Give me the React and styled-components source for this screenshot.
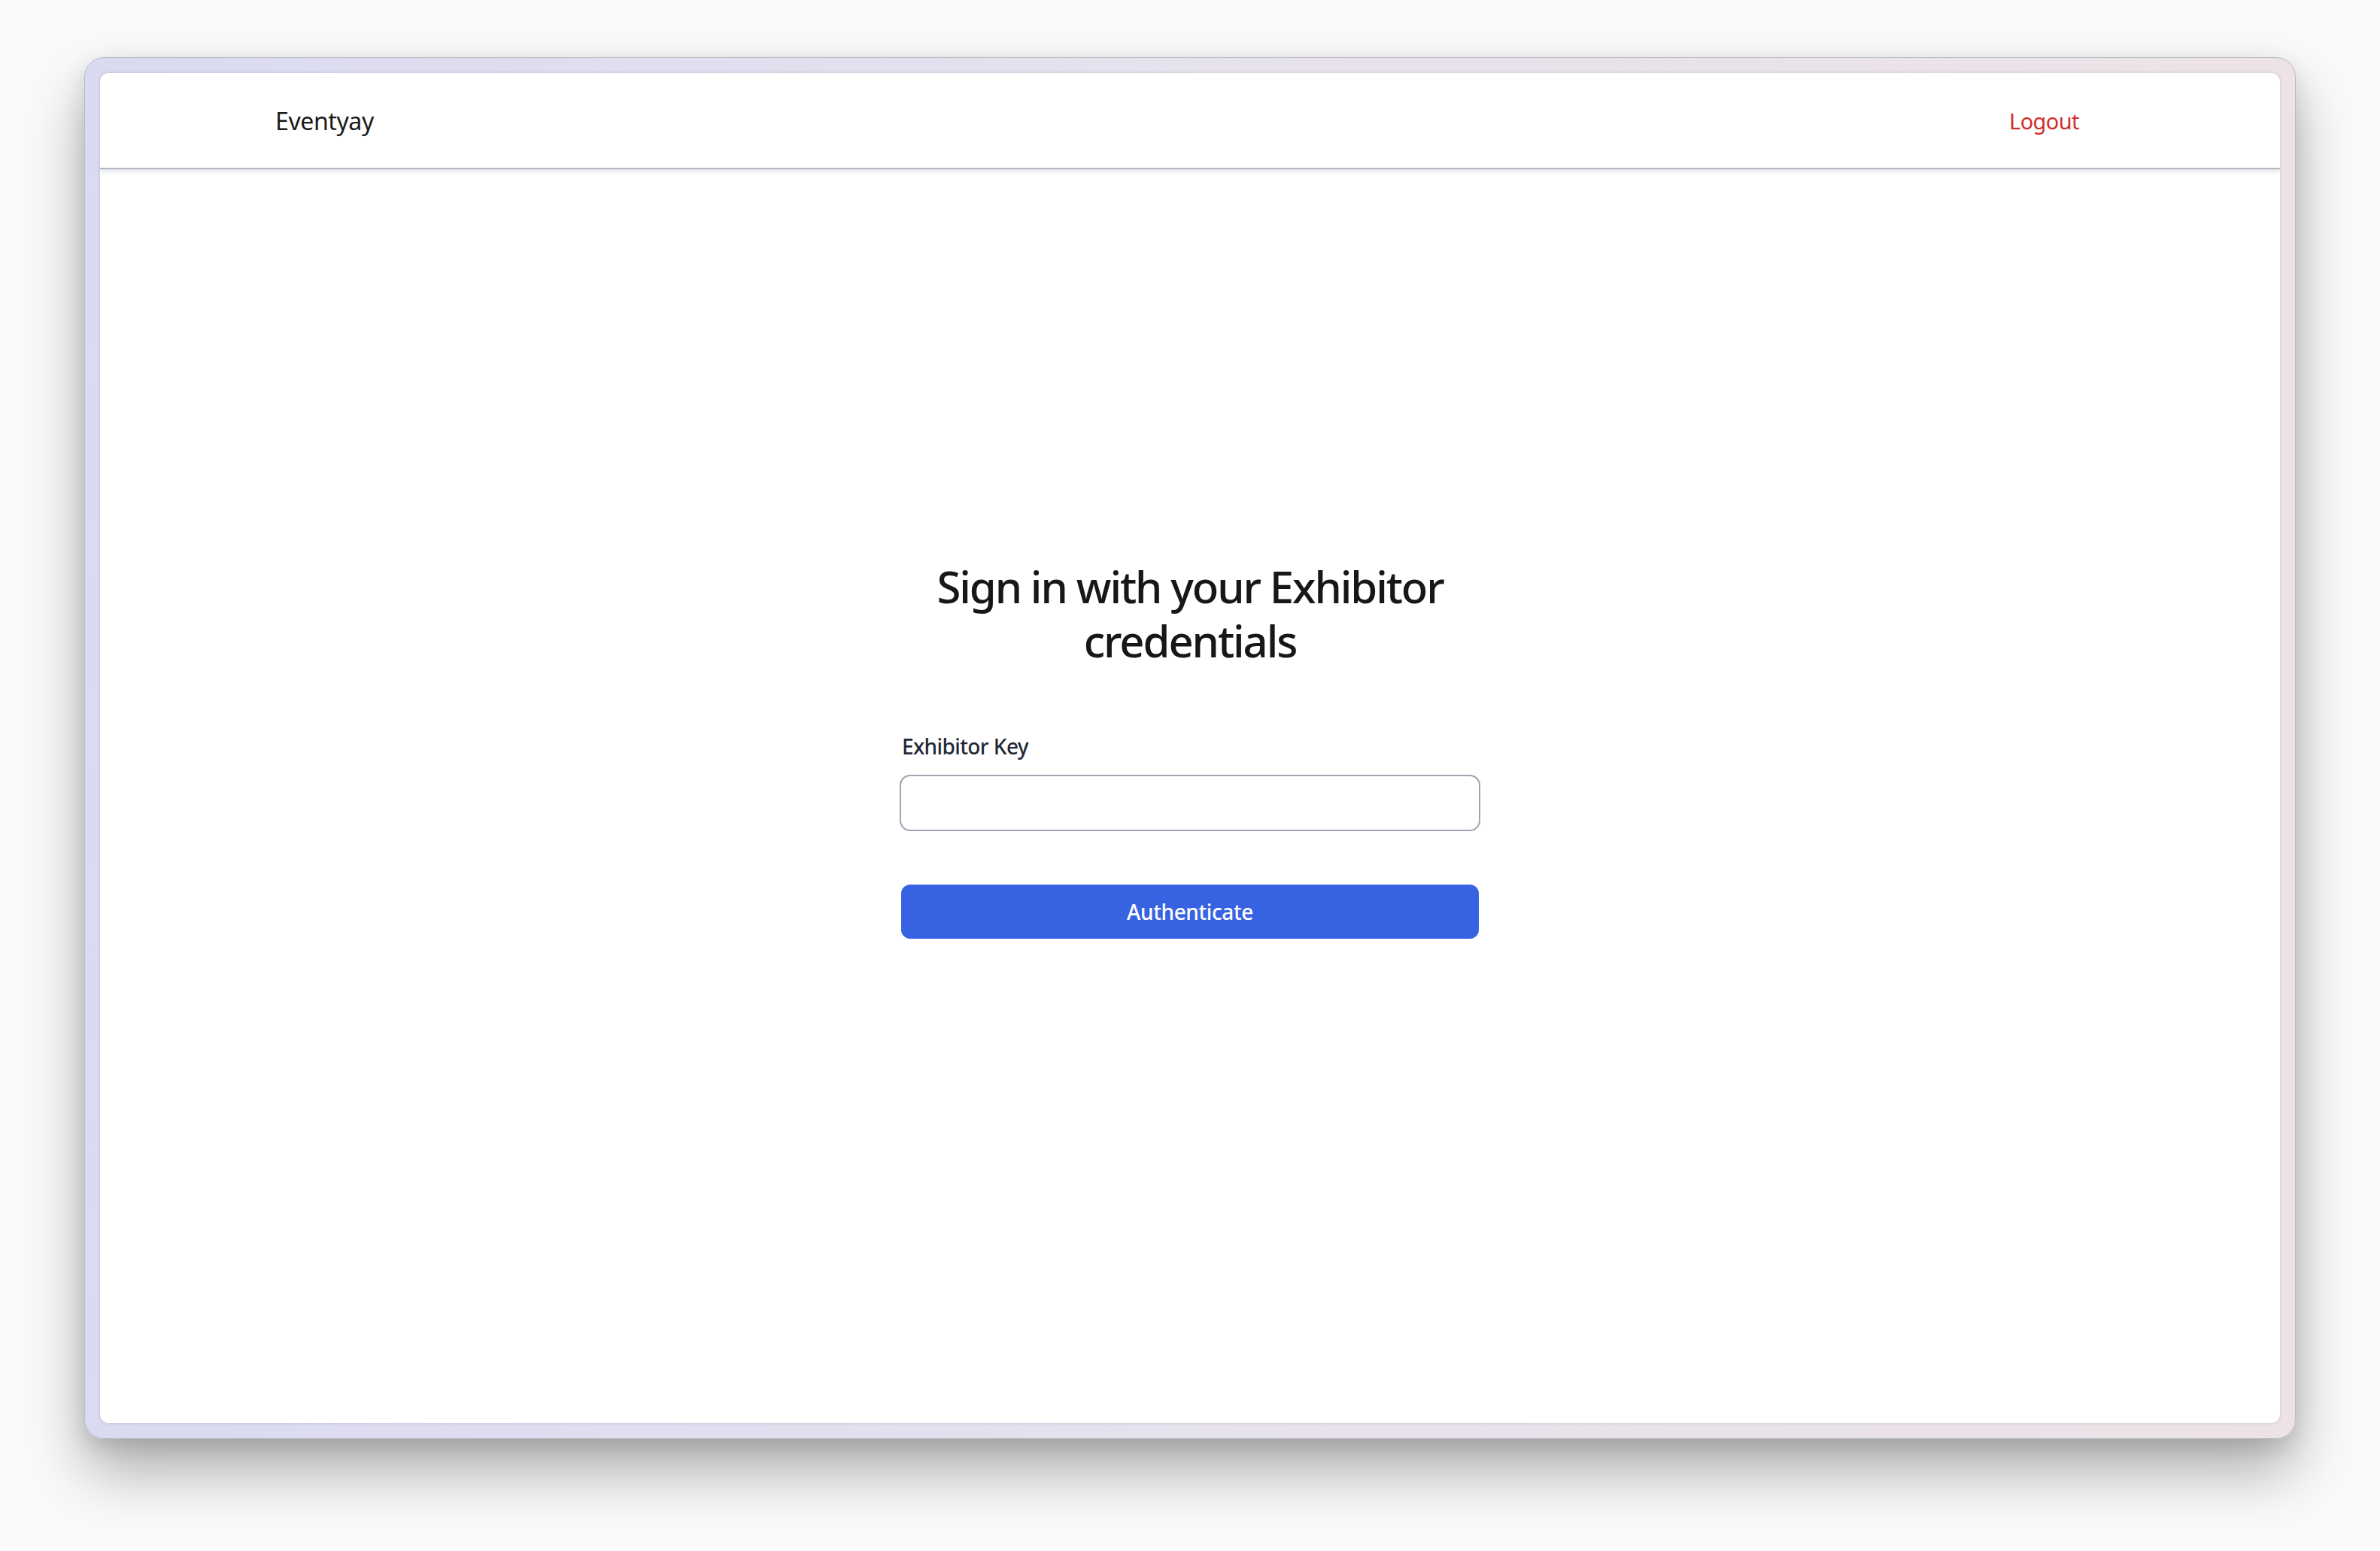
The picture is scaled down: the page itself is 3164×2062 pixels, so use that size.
import React from 'react';
import styled, { createGlobalStyle } from 'styled-components';

const GlobalStyle = createGlobalStyle`
  * {
    box-sizing: border-box;
  }
  body {
    margin: 0;
    background: #fafafa;
    font-family: 'Noto Sans', 'Open Sans', sans-serif;
  }
`;

const Page = styled.div`
  min-height: 100vh;
  padding: 76px 112px 149px;
  display: flex;
`;

const Frame = styled.div`
  flex: 1;
  display: flex;
  padding: 20px;
  border-radius: 26px;
  background: linear-gradient(90deg, #dadaf0 0%, #e6e2ee 50%, #ede3e6 100%);
  border: 1px solid #b9b9c4;
  box-shadow: 0 44px 80px rgba(0, 0, 0, 0.3), 0 10px 30px rgba(0, 0, 0, 0.12);
`;

const Window = styled.div`
  flex: 1;
  display: flex;
  flex-direction: column;
  background: #fff;
  border-radius: 12px;
  overflow: hidden;
  box-shadow: 0 0 4px rgba(60, 60, 90, 0.18);
`;

const Header = styled.header`
  height: 128px;
  display: flex;
  align-items: center;
  justify-content: space-between;
  padding: 0 267px 0 233px;
  border-bottom: 2px solid #b3b7c2;
  box-shadow: 0 3px 5px rgba(90, 100, 120, 0.18);
  position: relative;
`;

const Brand = styled.a`
  font-size: 32px;
  color: #1a1a1a;
  text-decoration: none;
  letter-spacing: -0.4px;
`;

const NavLink = styled.a`
  font-size: 29px;
  color: #cf2f2a;
  text-decoration: none;
  letter-spacing: -0.6px;
`;

const Main = styled.main`
  flex: 1;
  display: flex;
  justify-content: center;
  padding-top: 519px;
`;

const Form = styled.form`
  width: 772px;
  display: flex;
  flex-direction: column;
`;

const Title = styled.h1`
  margin: 0;
  font-size: 58px;
  line-height: 72px;
  font-weight: 500;
  text-align: center;
  color: #171717;
  letter-spacing: -2.1px;
`;

const Label = styled.label`
  margin-top: 84px;
  padding-left: 3px;
  font-size: 28px;
  line-height: 40px;
  font-weight: 500;
  color: #1f2937;
  letter-spacing: -0.6px;
`;

const Input = styled.input`
  margin-top: 18px;
  height: 75px;
  width: 100%;
  border: 2px solid #a0a4b0;
  border-radius: 14px;
  padding: 0 22px;
  font-size: 28px;
  font-family: inherit;
  outline: none;
  background: #fff;
`;

const Button = styled.button`
  margin: 71px 2px 0;
  height: 72px;
  border: none;
  border-radius: 12px;
  background: #3763e2;
  color: #fff;
  font-family: inherit;
  font-size: 28px;
  font-weight: 500;
  letter-spacing: -0.4px;
  cursor: pointer;
`;

const App = () => {
  return (
    <>
      <GlobalStyle />
      <Page>
        <Frame>
          <Window>
            <Header>
              <Brand href="#">Eventyay</Brand>
              <NavLink href="#">Logout</NavLink>
            </Header>
            <Main>
              <Form onSubmit={(e) => e.preventDefault()}>
                <Title>
                  Sign in with your Exhibitor
                  <br />
                  credentials
                </Title>
                <Label htmlFor="key">Exhibitor Key</Label>
                <Input id="key" type="text" />
                <Button type="submit">Authenticate</Button>
              </Form>
            </Main>
          </Window>
        </Frame>
      </Page>
    </>
  );
};

export default App;
